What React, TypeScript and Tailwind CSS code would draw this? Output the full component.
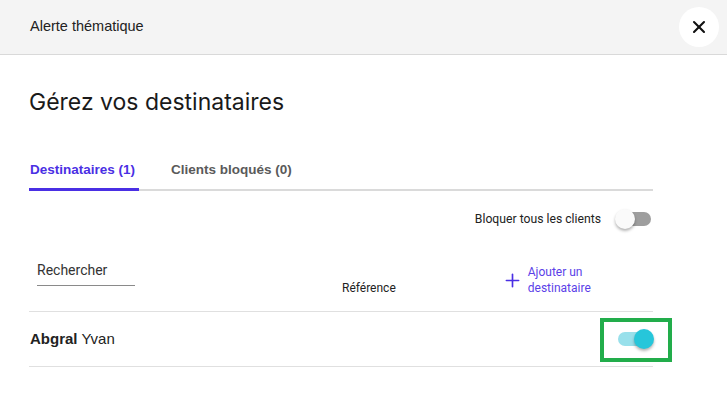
import { X, Plus } from "lucide-react";

function Toggle({ on }: { on: boolean }) {
  return (
    <span className="relative inline-flex h-5 w-[38px] items-center">
      <span
        className={
          on
            ? "ml-[2px] h-[14px] w-[34px] rounded-full bg-[#98e0eb]"
            : "ml-[2px] h-[14px] w-[34px] rounded-full bg-[#9e9e9e]"
        }
      />
      <span
        className={
          on
            ? "absolute left-[18px] top-0 h-5 w-5 rounded-full bg-[#26c6da] shadow-[0_2px_3px_rgba(0,0,0,0.3)]"
            : "absolute left-0 top-0 h-5 w-5 rounded-full bg-[#fafafa] shadow-[0_2px_3px_rgba(0,0,0,0.3)]"
        }
      />
    </span>
  );
}

export default function App() {
  return (
    <div className="h-[395px] w-[727px] overflow-hidden bg-white font-['Liberation_Sans',sans-serif] text-[#222]">
      <header className="flex h-[55px] items-center justify-between border-b border-[#d9d9d9] bg-[#f4f4f4] pl-[30px] pr-[8px]">
        <span className="text-[14.5px] text-[#222]">Alerte thématique</span>
        <button
          type="button"
          className="flex h-10 w-10 items-center justify-center rounded-full bg-white text-[#111]"
          aria-label="Fermer"
        >
          <X className="h-5 w-5" strokeWidth={2.5} />
        </button>
      </header>

      <main className="ml-[29px] w-[624px]">
        <h1 className="mt-[31px] font-['Inter',sans-serif] text-[23px] leading-8 text-[#1a1a1a]">
          Gérez vos destinataires
        </h1>

        <nav className="mt-[42px] flex gap-[32px] border-b-2 border-[#dadada] text-[13.5px] font-bold">
          <span className="-mb-[2px] border-b-[3px] border-[#4a2fe4] pl-[1px] pr-[4px] pb-[8px] leading-5 text-[#4a2fe4]">
            Destinataires (1)
          </span>
          <span className="pb-[8px] leading-5 text-[#5a5a5a]">Clients bloqués (0)</span>
        </nav>

        <div className="mt-[18px] flex items-center justify-end gap-[14px] font-['Roboto',sans-serif] text-[12.2px] text-[#222]">
          <span>Bloquer tous les clients</span>
          <Toggle on={false} />
        </div>

        <div className="mt-[31px] flex h-[52px] items-start border-b border-[#e0e0e0] font-['Roboto',sans-serif]">
          <div className="ml-[8px] w-[98px] border-b border-[#8a8a8a] pb-[5px] text-[14px] leading-5 text-[#333]">
            Rechercher
          </div>
          <span className="ml-[207px] mt-[19px] text-[12px] text-[#222]">Référence</span>
          <button type="button" className="ml-[106px] mt-[4px] flex items-center gap-[5px] text-left text-[12px] leading-4 text-[#5b3fe8]">
            <Plus className="h-[21px] w-[21px] text-[#4a2fe4]" strokeWidth={1.9} />
            <span>
              Ajouter un
              <br />
              destinataire
            </span>
          </button>
        </div>

        <div className="flex h-[55px] items-center justify-between border-b border-[#e0e0e0] text-[15px]">
          <span className="pl-[1px]">
            <b className="font-bold">Abgral</b> Yvan
          </span>
          <span className="relative mr-[-1px] flex">
            <span className="pointer-events-none absolute -left-[16px] -top-[11px] h-[44px] w-[72px] border-4 border-[#22ad4b]" />
            <Toggle on={true} />
          </span>
        </div>
      </main>
    </div>
  );
}
